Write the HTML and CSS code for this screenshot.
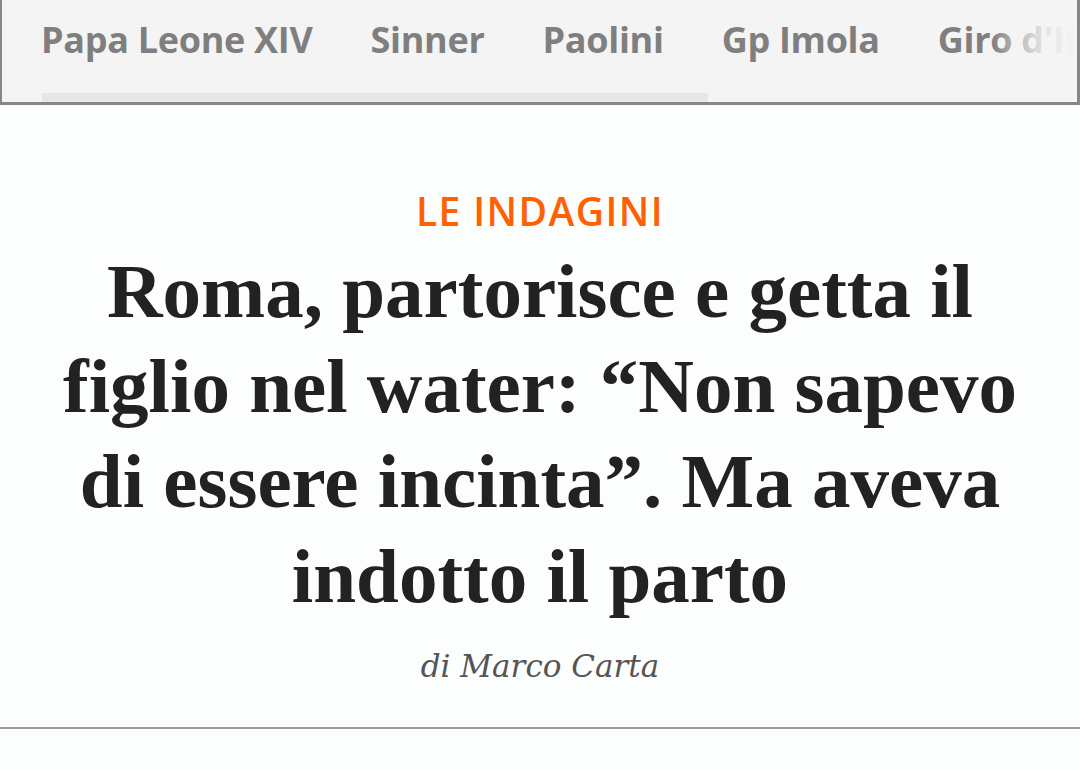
FILE: index.html
```html
<!DOCTYPE html>
<html lang="it">
<head>
    <meta charset="UTF-8">
    <meta name="viewport" content="width=device-width, initial-scale=1.0">
    <title>Roma, partorisce e getta il figlio nel water</title>
    <link rel="stylesheet" href="styles.css">
</head>
<body>

    <!-- Topics bar -->
    <header class="topics">
        <nav class="topicsList">
            <a href="#" class="topic">Papa Leone XIV</a>
            <a href="#" class="topic">Sinner</a>
            <a href="#" class="topic">Paolini</a>
            <a href="#" class="topic">Gp Imola</a>
            <a href="#" class="topic">Giro d'Italia</a>
        </nav>
        <div class="topicsThumb"></div>
        <span class="topicsFade"></span>
    </header>

    <!-- Article head -->
    <main class="articleHead">
        <p class="kicker">LE INDAGINI</p>
        <h1 class="headline">Roma, partorisce e getta il figlio nel water: “Non sapevo di essere incinta”. Ma aveva indotto il parto</h1>
        <p class="byline">di Marco Carta</p>
    </main>

    <hr class="rule">

</body>
</html>
```

FILE: styles.css
```css
body {
    margin: 0;
    padding: 0;
    background-color: #fcfdfd;
    font-family: 'Open Sans', 'Noto Sans', sans-serif;
    overflow-x: hidden;
}

/* Topics bar */
.topics {
    position: relative;
    height: 102px;
    background-color: #f4f4f4;
    border-style: solid;
    border-color: #878787;
    border-width: 0 3px 3px 2px;
    overflow: hidden;
}

.topicsList {
    display: flex;
    gap: 58px;
    padding: 22px 0 0 39px;
    white-space: nowrap;
}

.topic {
    font-size: 36px;
    line-height: 36px;
    font-weight: 700;
    color: #7f7f7f;
    text-decoration: none;
    letter-spacing: -0.3px;
}

.topicsThumb {
    width: 666px;
    height: 9px;
    margin: 35px 0 0 40px;
    background-color: #e6e6e6;
}

/* fades the last topic out at the right edge */
.topicsFade {
    position: absolute;
    top: 0;
    right: 0;
    width: 85px;
    height: 100%;
    background: linear-gradient(to right, rgba(244, 244, 244, 0), rgba(244, 244, 244, 0.5) 30%, rgba(244, 244, 244, 0.85) 60%, #f4f4f4);
}

/* Article head */
.articleHead {
    max-width: 1000px;
    margin: 0 auto;
    padding: 86px 0 0;
    text-align: center;
}

.kicker {
    margin: 0;
    font-size: 39px;
    line-height: 40px;
    font-weight: 600;
    letter-spacing: 1.4px;
    color: #ff6000;
}

.headline {
    margin: 13px 0 0;
    font-family: 'Liberation Serif', 'Times New Roman', serif;
    font-size: 77px;
    line-height: 95px;
    font-weight: 700;
    color: #222222;
}

.byline {
    margin: 24px 0 0;
    font-family: 'DejaVu Serif', serif;
    font-style: italic;
    font-size: 31px;
    line-height: 36px;
    color: #555555;
}

.rule {
    margin: 43px 0 0;
    border: none;
    height: 2px;
    background-color: #9a9a9a;
}
```
